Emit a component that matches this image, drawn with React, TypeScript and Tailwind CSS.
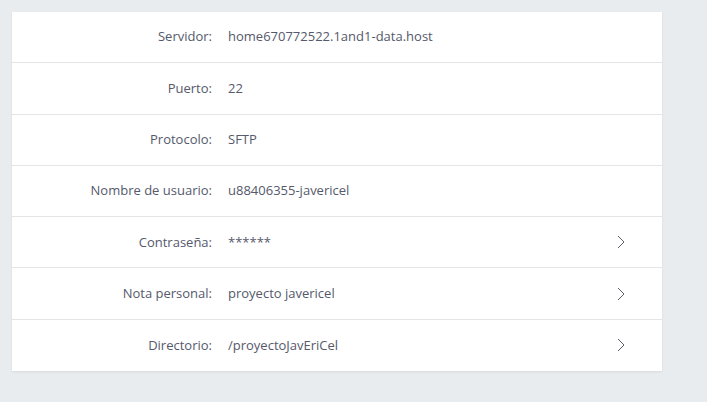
const rows = [
  { label: "Servidor:", value: "home670772522.1and1-data.host", arrow: false },
  { label: "Puerto:", value: "22", arrow: false },
  { label: "Protocolo:", value: "SFTP", arrow: false },
  { label: "Nombre de usuario:", value: "u88406355-javericel", arrow: false },
  { label: "Contraseña:", value: "******", arrow: true },
  { label: "Nota personal:", value: "proyecto javericel", arrow: true },
  { label: "Directorio:", value: "/proyectoJavEriCel", arrow: true },
];

function Chevron() {
  return (
    <svg width="8" height="14" viewBox="0 0 8 14" fill="none" className="text-[#5b6070]">
      <path d="M1 1l6 6-6 6" stroke="currentColor" strokeWidth="1" />
    </svg>
  );
}

export default function App() {
  return (
    <main className="min-h-[402px] w-[707px] bg-[#e9ecef] p-3 font-['Open_Sans',sans-serif]">
      <div className="w-[650px] bg-white shadow-[0_1px_2px_rgba(0,0,0,0.08)]">
        {rows.map((r, i) => (
          <div
            key={r.label}
            className={`flex h-[51.3px] items-center text-[13px] text-[#55596b] ${
              i < rows.length - 1 ? "border-b border-[#e4e5e7]" : ""
            }`}
          >
            <div className="w-[200px] shrink-0 text-right">{r.label}</div>
            <div className="flex-1 pl-4">{r.value}</div>
            {r.arrow && (
              <div className="pr-[37px]">
                <Chevron />
              </div>
            )}
          </div>
        ))}
      </div>
    </main>
  );
}
